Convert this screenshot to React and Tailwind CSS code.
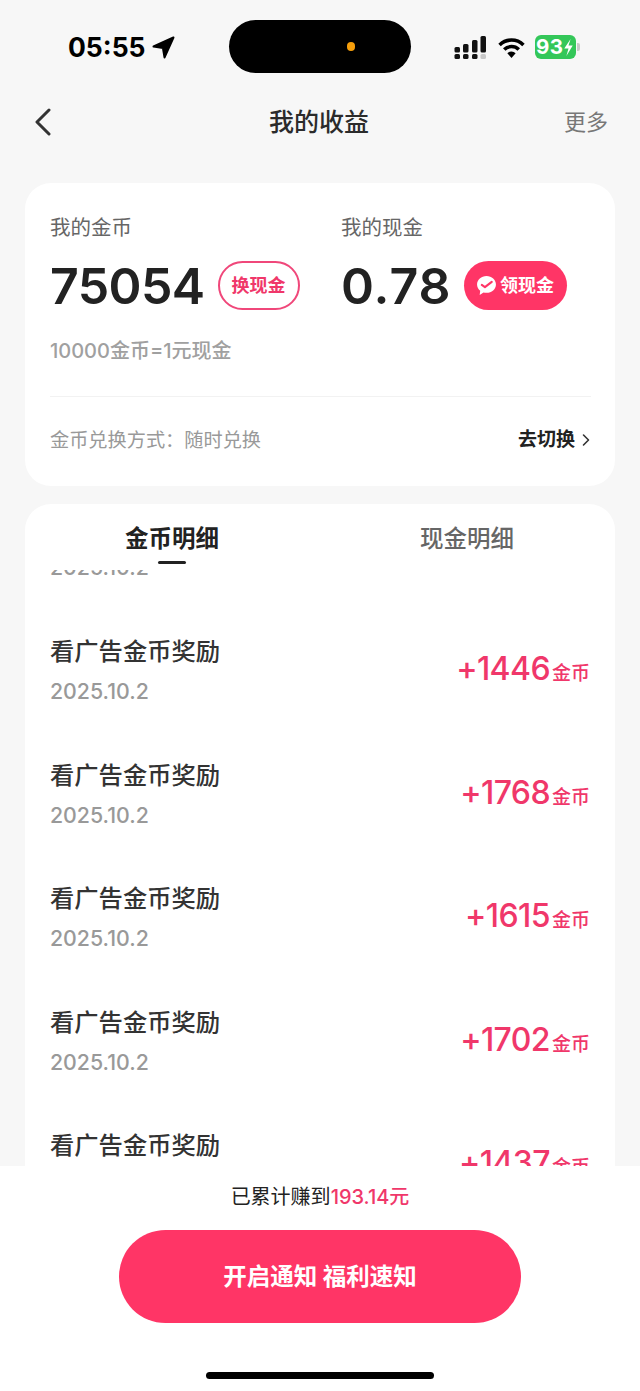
import React from "react";

const rows = [
  { n: "+1446" },
  { n: "+1768" },
  { n: "+1615" },
  { n: "+1702" },
  { n: "+1437" },
];

function Row({ n }) {
  return (
    <div className="h-[123.5px] shrink-0 flex items-center justify-between pl-[25px] pr-[25px]">
      <div className="flex flex-col">
        <span className="text-[24.3px] leading-[32px] font-medium text-[#333333]">看广告金币奖励</span>
        <span className="mt-[8px] text-[21.3px] font-medium leading-[32px] text-[#999999]">2025.10.2</span>
      </div>
      <div className="flex items-baseline text-[#f0376a] mt-[-4px]">
        <span className="text-[32px] font-medium leading-[40px] tracking-[-0.6px]">{n}</span>
        <span className="ml-[2px] text-[19px] font-medium leading-[24px]">金币</span>
      </div>
    </div>
  );
}

export default function App() {
  return (
    <div className="w-[640px] h-[1391px] flex flex-col overflow-hidden bg-[#f7f7f7] font-['Inter','Noto_Sans_CJK_SC',sans-serif]">
      {/* status bar */}
      <div className="h-[94px] shrink-0 pt-[20px] pl-[68px] flex items-start">
        <div className="w-[161px] h-[54px] flex items-center">
          <span className="text-[26.5px] font-bold leading-[30px] text-black">05:55</span>
          <svg width="23" height="23" viewBox="0 0 22 22" className="ml-[6px]">
            <path d="M20.5 1.5 L1.5 10 L10.5 11.5 L12 20.5 Z" fill="#000" stroke="#000" strokeWidth="2" strokeLinejoin="round" />
          </svg>
        </div>
        <div className="w-[182px] h-[53px] rounded-full bg-black flex items-center justify-end pr-[56px]">
          <span className="w-[8px] h-[9px] rounded-full bg-[#f59e0b]" />
        </div>
        <div className="ml-[43px] h-[54px] flex items-center">
          <svg width="33" height="23" viewBox="0 0 33 23">
            <rect x="0.5" y="11" width="5.5" height="5.5" rx="1.5" fill="#111" />
            <rect x="0.5" y="18" width="5.5" height="5" rx="1.5" fill="#111" />
            <rect x="9" y="8" width="5.5" height="8.5" rx="1.5" fill="#111" />
            <rect x="9" y="18" width="5.5" height="5" rx="1.5" fill="#111" />
            <rect x="18" y="4" width="5.5" height="12.5" rx="1.5" fill="#111" />
            <rect x="18" y="18" width="5.5" height="5" rx="1.5" fill="#111" />
            <rect x="26.5" y="0" width="5.5" height="16.5" rx="1.5" fill="#111" />
            <rect x="26.5" y="18" width="5.5" height="5" rx="1.5" fill="#c8c8c8" />
          </svg>
          <svg width="27" height="21" viewBox="0 0 26 20" className="ml-[11px]">
            <path d="M1.5 7.5 A16.5 16.5 0 0 1 24.5 7.5" fill="none" stroke="#000" strokeWidth="3.4" />
            <path d="M6 12 A10 10 0 0 1 20 12" fill="none" stroke="#000" strokeWidth="3.4" />
            <path d="M9 15.5 L13 20 L17 15.5 A6 6 0 0 0 9 15.5 Z" fill="#000" />
          </svg>
          <div className="ml-[10px] w-[41px] h-[24px] rounded-[6px] bg-[#34c759] flex items-center pl-[1px]">
            <span className="text-[20.5px] font-bold leading-[24px] text-white tracking-[0.4px] whitespace-nowrap">93</span>
            <svg width="11" height="19" viewBox="0 0 10 18" className="shrink-0">
              <path d="M7 1 L1 10 H5 L3 17 L9 7 H5 Z" fill="#fff" />
            </svg>
          </div>
          <div className="ml-[1px] w-[3px] h-[8px] rounded-r-[2px] bg-[#c9c9c9]" />
        </div>
      </div>

      {/* nav bar */}
      <div className="h-[56px] shrink-0 flex items-center pl-[34px] pr-[32px]">
        <div className="w-[80px]">
          <svg width="18" height="28" viewBox="0 0 18 28">
            <path d="M15 2 L3 14 L15 26" fill="none" stroke="#333" strokeWidth="3" strokeLinecap="round" strokeLinejoin="round" />
          </svg>
        </div>
        <span className="flex-1 text-center pr-[4px] text-[25px] font-medium leading-[32px] text-[#2b2b2b]">我的收益</span>
        <span className="w-[80px] text-right text-[22px] leading-[32px] text-[#777777]">更多</span>
      </div>

      {/* balance card */}
      <div className="mt-[33px] mx-[25px] h-[303px] shrink-0 rounded-[26px] bg-white pl-[25px] pr-[24px] pt-[30px] flex flex-col">
        <div className="flex">
          <div className="w-[291px]">
            <div className="text-[20.5px] leading-[30px] text-[#666666]">我的金币</div>
            <div className="mt-[18px] flex items-center">
              <span className="text-[50px] font-semibold leading-[48px] tracking-[-0.6px] text-[#222222]">75054</span>
              <span className="ml-[13px] w-[82px] h-[49px] rounded-full border-2 border-[#f0477a] text-[#f0376a] text-[18px] font-bold flex items-center justify-center">换现金</span>
            </div>
          </div>
          <div>
            <div className="text-[20.5px] leading-[30px] text-[#666666]">我的现金</div>
            <div className="mt-[18px] flex items-center">
              <span className="text-[50px] font-semibold leading-[48px] tracking-[1px] text-[#222222]">0.78</span>
              <span className="ml-[12px] w-[103px] h-[49px] rounded-full bg-[#ff3566] text-white text-[18px] font-bold flex items-center justify-center">
                <svg width="21" height="21" viewBox="0 0 20 20" className="mr-[3px]">
                  <path d="M10 1 C15 1 19 4.6 19 9 C19 13.4 15 17 10 17 C9 17 8 16.9 7.2 16.6 L3.5 19 L4 15 C2.2 13.6 1 11.4 1 9 C1 4.6 5 1 10 1 Z" fill="#fff" />
                  <path d="M5.5 9.5 L8.5 11.5 L15 6.5" fill="none" stroke="#ff3566" strokeWidth="2" strokeLinecap="round" strokeLinejoin="round" />
                </svg>
                领现金
              </span>
            </div>
          </div>
        </div>
        <div className="mt-[26px] text-[20px] font-medium leading-[30px] text-[#a0a0a0]">10000金币=1元现金</div>
        <div className="mt-[30px] h-px bg-[#f2f2f2]" />
        <div className="mt-[28px] flex items-center justify-between">
          <span className="text-[19.2px] leading-[30px] text-[#999999]">金币兑换方式：随时兑换</span>
          <span className="flex items-center text-[19px] leading-[30px] font-bold text-[#222222]">
            去切换
            <svg width="10" height="14" viewBox="0 0 10 14" className="ml-[6px]">
              <path d="M2.5 2 L7.5 7 L2.5 12" fill="none" stroke="#333" strokeWidth="1.6" strokeLinecap="round" strokeLinejoin="round" />
            </svg>
          </span>
        </div>
      </div>

      {/* detail card */}
      <div className="mt-[18px] mx-[25px] flex-1 min-h-0 rounded-t-[26px] bg-white flex flex-col overflow-hidden">
        <div className="h-[66px] shrink-0 flex">
          <div className="w-[294px] flex flex-col items-center pt-[19px]">
            <span className="text-[23.5px] font-bold leading-[32px] text-[#222222]">金币明细</span>
            <span className="mt-[6px] w-[28px] h-[3px] rounded-full bg-[#222222]" />
          </div>
          <div className="w-[296px] pt-[19px] text-center">
            <span className="text-[23.5px] font-medium leading-[32px] text-[#666666]">现金明细</span>
          </div>
        </div>
        <div className="flex-1 min-h-0 overflow-hidden">
          <div className="h-[5px] overflow-hidden pl-[25px] flex items-end">
            <span className="text-[21.3px] font-medium leading-[32px] text-[#999999] translate-y-[8px]">2025.10.2</span>
          </div>
          <div className="flex flex-col mt-[34.25px]">
            {rows.map((r) => (
              <Row key={r.n} n={r.n} />
            ))}
          </div>
        </div>
      </div>

      {/* footer */}
      <div className="h-[225px] shrink-0 bg-white flex flex-col items-center pt-[17px]">
        <div className="text-[20px] leading-[28px] text-[#222222]">
          已累计赚到<span className="text-[#f0376a] font-medium">193.14元</span>
        </div>
        <div className="mt-[19px] w-[402px] h-[93px] rounded-full bg-[#ff3566] text-white text-[23.5px] font-bold flex items-center justify-center">
          开启通知 福利速知
        </div>
        <div className="mt-[49px] w-[228px] h-[7px] rounded-full bg-black" />
      </div>
    </div>
  );
}
